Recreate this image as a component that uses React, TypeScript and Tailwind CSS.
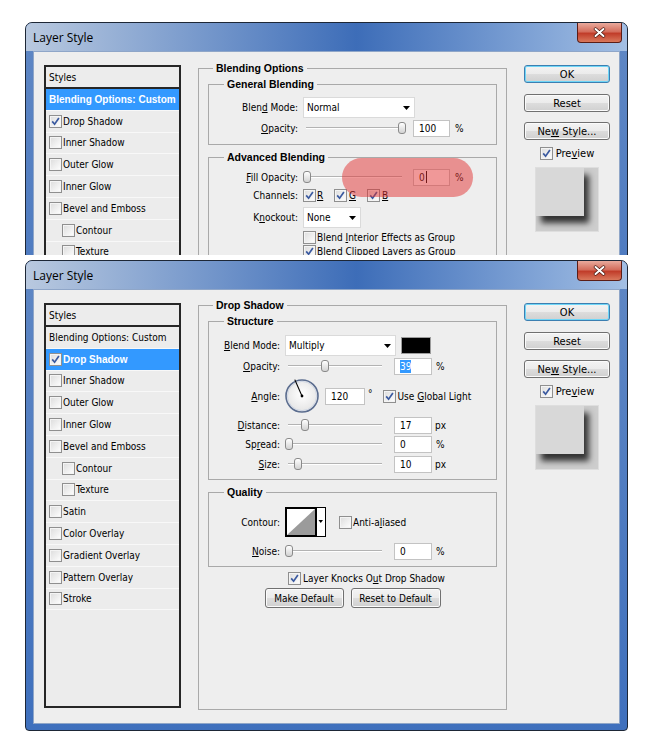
import React from "react";

const styleItems: { label: string; sub?: boolean }[] = [
  { label: "Drop Shadow" },
  { label: "Inner Shadow" },
  { label: "Outer Glow" },
  { label: "Inner Glow" },
  { label: "Bevel and Emboss" },
  { label: "Contour", sub: true },
  { label: "Texture", sub: true },
  { label: "Satin" },
  { label: "Color Overlay" },
  { label: "Gradient Overlay" },
  { label: "Pattern Overlay" },
  { label: "Stroke" },
];

// bold text in the dialog is drawn with the narrower Liberation face
const BOLD = "font-['Liberation_Sans',sans-serif] font-bold";

function Check({ on, className = "" }: { on?: boolean; className?: string }) {
  return (
    <span
      className={`flex h-[13px] w-[13px] shrink-0 items-center justify-center border border-[#8f8f8f] bg-linear-to-br from-[#dcdcdc] to-white shadow-[inset_0_0_0_1px_#f4f4f4] ${className}`}
    >
      {on && (
        <svg width="9" height="9" viewBox="0 0 9 9">
          <path d="M1.2 4.4 3.6 7.2 7.9 1" fill="none" stroke="#3b5aa0" strokeWidth="1.7" />
        </svg>
      )}
    </span>
  );
}

function U({ children }: { children: React.ReactNode }) {
  return <u className="underline-offset-[1px]">{children}</u>;
}

function Lbl({ w, children }: { w: string; children?: React.ReactNode }) {
  return <div className={`${w} shrink-0 pr-[5px] text-right`}>{children}</div>;
}

function Slider({ w, at }: { w: number; at: number }) {
  return (
    <div className="relative h-[16px] shrink-0" style={{ width: w }}>
      <div className="absolute inset-x-[3px] top-[7px] h-[2px] border-t border-b border-t-[#b3b3b3] border-b-white" />
      <div
        className="absolute top-[2px] h-[12px] w-[8px] rounded-[3px] border border-[#8a8a8a] bg-linear-to-b from-white to-[#d2d2d2]"
        style={{ left: at }}
      />
    </div>
  );
}

function Field({ className, children }: { className: string; children: React.ReactNode }) {
  return (
    <div className={`flex h-[17px] shrink-0 items-center border border-[#c3c3c3] bg-white pl-[5px] ${className}`}>
      {children}
    </div>
  );
}

function Select({ value, className }: { value: string; className: string }) {
  return (
    <div
      className={`flex h-[21px] shrink-0 items-center justify-between border border-[#dadada] bg-white pl-[3px] pr-[4px] ${className}`}
    >
      <span>{value}</span>
      <svg width="7" height="4" viewBox="0 0 7 4">
        <path d="M0 0h7L3.5 4z" fill="#000" />
      </svg>
    </div>
  );
}

function Btn({ children, className, def }: { children: React.ReactNode; className: string; def?: boolean }) {
  return (
    <div
      className={`flex shrink-0 items-center justify-center rounded-[3px] border bg-[linear-gradient(#f3f3f3,#ebebeb_50%,#dddddd_50%,#d0d0d0)] ${
        def
          ? "border-[#3c7fb1] shadow-[inset_0_0_0_1px_#6fd6f7]"
          : "border-[#707070] shadow-[inset_0_0_0_1px_#fbfbfb]"
      } ${className}`}
    >
      {children}
    </div>
  );
}

function StylesList({ active }: { active: "blend" | "drop" }) {
  return (
    <div className="flex h-[405px] w-[137px] shrink-0 flex-col border-2 border-[#262626] bg-[#ececec]">
      <div className="flex h-[22px] shrink-0 items-center border-b-2 border-[#262626] pl-[3px]">Styles</div>
      <div
        className={`flex h-[21.8px] shrink-0 items-center whitespace-nowrap border-b border-[#f8f8f8] pl-[3px] ${
          active === "blend" ? `bg-[#3399ff] text-white ${BOLD}` : ""
        }`}
      >
        Blending Options: Custom
      </div>
      {styleItems.map((it, i) => {
        const sel = active === "drop" && i === 0;
        return (
          <div
            key={it.label}
            className={`flex h-[21.8px] shrink-0 items-center gap-[1px] border-b border-[#f8f8f8] ${
              it.sub ? "pl-[16px]" : "pl-[3px]"
            } ${sel ? `bg-[#3399ff] text-white ${BOLD}` : ""}`}
          >
            <Check on={i === 0} />
            <span>{it.label}</span>
          </div>
        );
      })}
    </div>
  );
}

function RightColumn() {
  return (
    <div className="flex w-[86px] shrink-0 flex-col items-center text-[11px]">
      <Btn def className="h-[18px] w-[86px]">
        OK
      </Btn>
      <Btn className="mt-[11px] h-[18px] w-[86px]">Reset</Btn>
      <Btn className="mt-[10px] h-[18px] w-[86px]">
        <span>
          Ne<U>w</U> Style...
        </span>
      </Btn>
      <div className="mt-[6px] flex h-[14px] items-center gap-[3px]">
        <Check on />
        <span>
          Pre<U>v</U>iew
        </span>
      </div>
      <div className="mt-[7px] h-[65px] w-[64px] overflow-hidden border border-[#dedede] bg-[#cdcdcd]">
        <div className="h-[48px] w-[48px] bg-[#d8d8d8] shadow-[5px_7px_6px_rgba(0,0,0,0.75)]" />
      </div>
    </div>
  );
}

function Legend({ children, className }: { children: React.ReactNode; className: string }) {
  return <legend className={`px-[3px] text-[10.5px] leading-[13px] ${BOLD} ${className}`}>{children}</legend>;
}

function BlendingPanel() {
  return (
    <fieldset className="mt-[-3px] h-[411px] w-[309px] shrink-0 border border-[#a9a9a9] px-[9px]">
      <Legend className="ml-[5px]">Blending Options</Legend>
      <fieldset className="mt-[3px] border border-[#a9a9a9] pb-[8px]">
        <Legend className="ml-[15px]">General Blending</Legend>
        <div className="mt-[6px] flex h-[21px] items-center">
          <Lbl w="w-[94px]">
            Blen<U>d</U> Mode:
          </Lbl>
          <Select value="Normal" className="w-[112px]" />
        </div>
        <div className="mt-[2px] flex h-[16px] items-center">
          <Lbl w="w-[94px]">
            <U>O</U>pacity:
          </Lbl>
          <Slider w={102} at={95} />
          <Field className="ml-[8px] w-[37px]">100</Field>
          <span className="ml-[5px]">%</span>
        </div>
      </fieldset>
      <fieldset className="mt-[6px] border border-[#a9a9a9] pb-[8px]">
        <Legend className="ml-[15px]">Advanced Blending</Legend>
        <div className="relative mt-[5px] flex h-[16px] items-center">
          <Lbl w="w-[94px]">
            <U>F</U>ill Opacity:
          </Lbl>
          <Slider w={102} at={0} />
          <Field className="ml-[8px] w-[37px]">
            0<span className="ml-[1px] h-[12px] w-[1px] bg-black" />
          </Field>
          <span className="ml-[5px]">%</span>
          <div className="pointer-events-none absolute left-[133px] top-[-11px] h-[39px] w-[131px] rounded-full bg-[rgba(225,50,50,0.5)]" />
        </div>
        <div className="mt-[3px] flex h-[15px] items-center">
          <Lbl w="w-[94px]">Channels:</Lbl>
          <div className="flex w-[31px] items-center gap-[1px]">
            <Check on />
            <U>R</U>
          </div>
          <div className="flex w-[33px] items-center gap-[2px]">
            <Check on />
            <U>G</U>
          </div>
          <div className="flex items-center gap-[2px]">
            <Check on />
            <U>B</U>
          </div>
        </div>
        <div className="mt-[4px] flex h-[21px] items-center">
          <Lbl w="w-[94px]">
            K<U>n</U>ockout:
          </Lbl>
          <Select value="None" className="w-[58px]" />
        </div>
        <div className="mt-[2px] flex h-[14px] items-center">
          <Lbl w="w-[94px]" />
          <Check />
          <span className="ml-[1px]">
            Blend <U>I</U>nterior Effects as Group
          </span>
        </div>
        <div className="flex h-[14px] items-center">
          <Lbl w="w-[94px]" />
          <Check on />
          <span className="ml-[1px]">Blend Clipped Layers as Group</span>
        </div>
      </fieldset>
    </fieldset>
  );
}

function Dial() {
  return (
    <svg width="34" height="34" viewBox="0 0 34 34" className="shrink-0">
      <defs>
        <radialGradient id="dialFill" cx="50%" cy="45%" r="60%">
          <stop offset="0" stopColor="#ffffff" />
          <stop offset="1" stopColor="#e2e2e2" />
        </radialGradient>
      </defs>
      <circle cx="17" cy="17" r="16" fill="url(#dialFill)" stroke="#5b6d8f" strokeWidth="1.6" />
      <circle cx="17" cy="17" r="14.6" fill="none" stroke="#c9d2e2" strokeWidth="0.8" />
      <line x1="17" y1="17" x2="9.8" y2="0.6" stroke="#000" strokeWidth="1.1" />
      <circle cx="17" cy="17" r="1.4" fill="#000" />
    </svg>
  );
}

function ContourSwatch() {
  return (
    <svg width="41" height="30" viewBox="0 0 41 30" className="shrink-0">
      <rect x="0" y="0" width="41" height="30" fill="#fff" />
      <path d="M2 28 L30 2 V28 Z" fill="#9b9b9b" />
      <rect x="1" y="1" width="30" height="28" fill="none" stroke="#000" strokeWidth="2" />
      <rect x="31" y="0.5" width="9.5" height="29" fill="none" stroke="#000" strokeWidth="1" />
      <path d="M33.5 13h4.5l-2.25 3z" fill="#000" />
    </svg>
  );
}

function DropShadowPanel() {
  return (
    <fieldset className="mt-[-4px] h-[411px] w-[309px] shrink-0 border border-[#a9a9a9] px-[9px]">
      <Legend className="ml-[5px]">Drop Shadow</Legend>
      <fieldset className="mt-[3px] border border-[#a9a9a9] pb-[7px]">
        <Legend className="ml-[15px]">Structure</Legend>
        <div className="mt-[7px] flex h-[21px] items-center">
          <Lbl w="w-[76px]">
            <U>B</U>lend Mode:
          </Lbl>
          <Select value="Multiply" className="w-[111px]" />
          <div className="ml-[5px] h-[17px] w-[30px] border border-[#9c9c9c] bg-black" />
        </div>
        <div className="mt-[2px] flex h-[16px] items-center">
          <Lbl w="w-[76px]">
            <U>O</U>pacity:
          </Lbl>
          <Slider w={100} at={36} />
          <Field className="ml-[9px] w-[38px]">
            <span className="bg-[#3399ff] text-white">39</span>
          </Field>
          <span className="ml-[4px]">%</span>
        </div>
        <div className="mt-[5px] flex h-[34px] items-center">
          <Lbl w="w-[76px]">
            <U>A</U>ngle:
          </Lbl>
          <Dial />
          <Field className="ml-[6px] w-[40px]">120</Field>
          <span className="ml-[3px] self-start pt-[8px]">°</span>
          <Check on className="ml-[10px]" />
          <span className="ml-[2px]">
            Use <U>G</U>lobal Light
          </span>
        </div>
        <div className="mt-[4px] flex h-[16px] items-center">
          <Lbl w="w-[76px]">
            <U>D</U>istance:
          </Lbl>
          <Slider w={100} at={16} />
          <Field className="ml-[9px] w-[38px]">17</Field>
          <span className="ml-[3px]">px</span>
        </div>
        <div className="mt-[3px] flex h-[16px] items-center">
          <Lbl w="w-[76px]">
            Sp<U>r</U>ead:
          </Lbl>
          <Slider w={100} at={0} />
          <Field className="ml-[9px] w-[38px]">0</Field>
          <span className="ml-[4px]">%</span>
        </div>
        <div className="mt-[4px] flex h-[16px] items-center">
          <Lbl w="w-[76px]">
            <U>S</U>ize:
          </Lbl>
          <Slider w={100} at={9} />
          <Field className="ml-[9px] w-[38px]">10</Field>
          <span className="ml-[3px]">px</span>
        </div>
      </fieldset>
      <fieldset className="mt-[6px] border border-[#a9a9a9] pb-[7px]">
        <Legend className="ml-[15px]">Quality</Legend>
        <div className="mt-[8px] flex h-[30px] items-center">
          <Lbl w="w-[76px]">Contour:</Lbl>
          <ContourSwatch />
          <Check className="ml-[13px]" />
          <span className="ml-[1px]">
            Anti-a<U>l</U>iased
          </span>
        </div>
        <div className="mt-[6px] flex h-[16px] items-center">
          <Lbl w="w-[76px]">
            <U>N</U>oise:
          </Lbl>
          <Slider w={100} at={0} />
          <Field className="ml-[9px] w-[38px]">0</Field>
          <span className="ml-[4px]">%</span>
        </div>
      </fieldset>
      <div className="mt-[4px] flex h-[14px] items-center pl-[80px]">
        <Check on />
        <span className="ml-[2px]">
          Layer Knocks O<U>u</U>t Drop Shadow
        </span>
      </div>
      <div className="mt-[3px] flex justify-center gap-[7px]">
        <Btn className="h-[20px] w-[79px]">Make Default</Btn>
        <Btn className="h-[20px] w-[90px]">Reset to Default</Btn>
      </div>
    </fieldset>
  );
}

function Dialog({ active, children }: { active: "blend" | "drop"; children: React.ReactNode }) {
  return (
    <div className="flex w-[603px] flex-col overflow-hidden rounded-t-[7px] rounded-b-[4px] border border-[#1d2736] bg-linear-to-b from-[#5f87c4] to-[#3f70bd]">
      <div className="flex h-[28px] shrink-0 items-start justify-between bg-linear-to-r from-[#b9c9df] via-[#3d6db8] via-55% to-[#a3bfe4] pl-[7px] pr-[5px]">
        <span className="self-center font-['Open_Sans',sans-serif] text-[12px] text-black">Layer Style</span>
        <div className="flex h-[20px] w-[45px] items-center justify-center rounded-b-[4px] border border-t-0 border-[#5b1d16] bg-[linear-gradient(#e9aa9d,#d46e5d_45%,#c13d2a_55%,#d9785c)]">
          <svg width="13" height="11" viewBox="0 0 13 11">
            <path d="M2.5 2 10.5 9 M10.5 2 2.5 9" stroke="#4a1a12" strokeWidth="3.4" strokeLinecap="round" />
            <path d="M2.5 2 10.5 9 M10.5 2 2.5 9" stroke="#fff" strokeWidth="2" strokeLinecap="round" />
          </svg>
        </div>
      </div>
      <div className="px-[7px] pb-[6px]">
        <div className="flex border border-[#8fa6c8] bg-[#eeeeee] pb-[13px] pl-[10px] pt-[13px]">
          <StylesList active={active} />
          <div className="ml-[17px]">{children}</div>
          <div className="ml-[17px]">
            <RightColumn />
          </div>
        </div>
      </div>
    </div>
  );
}

export default function App() {
  return (
    <div className="h-[744px] w-[650px] overflow-hidden bg-white pl-[25px] pt-[22px] font-['DejaVu_Sans_Condensed','DejaVu_Sans',sans-serif] text-[10px] leading-[13px] text-black">
      <div className="h-[233px] overflow-hidden">
        <Dialog active="blend">
          <BlendingPanel />
        </Dialog>
      </div>
      <div className="mt-[5px]">
        <Dialog active="drop">
          <DropShadowPanel />
        </Dialog>
      </div>
    </div>
  );
}
